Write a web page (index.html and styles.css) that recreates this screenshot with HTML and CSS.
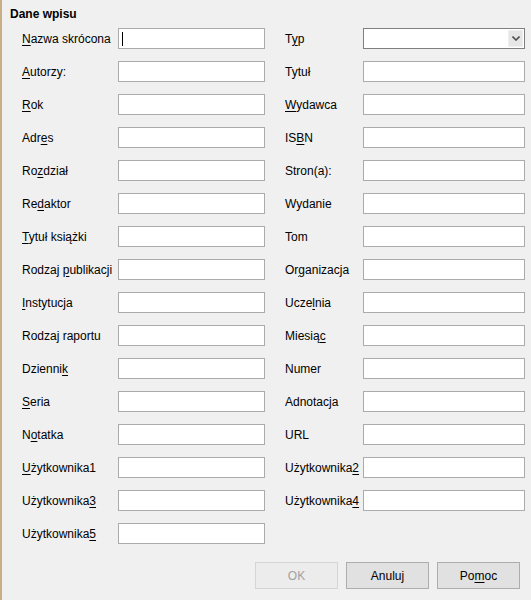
FILE: index.html
```html
<!DOCTYPE html>
<html lang="pl">
<head>
<meta charset="utf-8">
<title>Dane wpisu</title>
<link rel="stylesheet" href="styles.css">
</head>
<body>
<div class="dialog">
  <div class="title">Dane wpisu</div>
  <div class="form">
    <label class="lbl"><span><u>N</u>azwa skrócona</span></label>
    <div class="field"><span class="caret"></span></div>
    <label class="lbl r"><span>T<u>y</u>p</span></label>
    <div class="combo"><span class="drop"><svg width="8" height="5" viewBox="0 0 8 5"><path d="M0.5 0.5 L4 4 L7.5 0.5" fill="none" stroke="#505050" stroke-width="1.6"/></svg></span></div>

    <label class="lbl"><span><u>A</u>utorzy:</span></label>
    <div class="field"></div>
    <label class="lbl r"><span>Tytuł</span></label>
    <div class="field wide"></div>

    <label class="lbl"><span><u>R</u>ok</span></label>
    <div class="field"></div>
    <label class="lbl r"><span><u>W</u>ydawca</span></label>
    <div class="field wide"></div>

    <label class="lbl"><span>Adr<u>e</u>s</span></label>
    <div class="field"></div>
    <label class="lbl r"><span>IS<u>B</u>N</span></label>
    <div class="field wide"></div>

    <label class="lbl"><span>Ro<u>z</u>dział</span></label>
    <div class="field"></div>
    <label class="lbl r"><span>Stron(a):</span></label>
    <div class="field wide"></div>

    <label class="lbl"><span>Re<u>d</u>aktor</span></label>
    <div class="field"></div>
    <label class="lbl r"><span>Wydanie</span></label>
    <div class="field wide"></div>

    <label class="lbl"><span><u>T</u>ytuł książki</span></label>
    <div class="field"></div>
    <label class="lbl r"><span>Tom</span></label>
    <div class="field wide"></div>

    <label class="lbl"><span>Rodzaj <u>p</u>ublikacji</span></label>
    <div class="field"></div>
    <label class="lbl r"><span>Or<u>g</u>anizacja</span></label>
    <div class="field wide"></div>

    <label class="lbl"><span><u>I</u>nstytucja</span></label>
    <div class="field"></div>
    <label class="lbl r"><span>Ucze<u>l</u>nia</span></label>
    <div class="field wide"></div>

    <label class="lbl"><span>Rodzaj raportu</span></label>
    <div class="field"></div>
    <label class="lbl r"><span>Miesią<u>c</u></span></label>
    <div class="field wide"></div>

    <label class="lbl"><span>Dzienni<u>k</u></span></label>
    <div class="field"></div>
    <label class="lbl r"><span>Numer</span></label>
    <div class="field wide"></div>

    <label class="lbl"><span><u>S</u>eria</span></label>
    <div class="field"></div>
    <label class="lbl r"><span>Adnotacja</span></label>
    <div class="field wide"></div>

    <label class="lbl"><span>N<u>o</u>tatka</span></label>
    <div class="field"></div>
    <label class="lbl r"><span>URL</span></label>
    <div class="field wide"></div>

    <label class="lbl"><span><u>U</u>żytkownika1</span></label>
    <div class="field"></div>
    <label class="lbl r"><span>Użytkownika<u>2</u></span></label>
    <div class="field wide"></div>

    <label class="lbl"><span>Użytkownika<u>3</u></span></label>
    <div class="field"></div>
    <label class="lbl r"><span>Użytkownika<u>4</u></span></label>
    <div class="field wide"></div>

    <label class="lbl"><span>Użytkownika<u>5</u></span></label>
    <div class="field"></div>
  </div>
  <div class="buttons">
    <button class="btn disabled">OK</button>
    <button class="btn">Anuluj</button>
    <button class="btn">Po<u>m</u>oc</button>
  </div>
</div>
</body>
</html>
```

FILE: styles.css
```css
html, body {
  margin: 0;
  padding: 0;
  background: #f0f0f0;
}
body {
  font-family: "Liberation Sans", Arial, sans-serif;
  font-size: 12px;
  color: #000;
}
.dialog {
  width: 529px;
  height: 600px;
  border-left: 2px solid #c9ad84;
  box-sizing: content-box;
}
.title {
  font-weight: bold;
  line-height: 16px;
  padding: 6px 0 0 8px;
  margin-bottom: 6px;
}
.form {
  display: grid;
  grid-template-columns: 96px 147px 98px 162px;
  grid-auto-rows: 21px;
  row-gap: 12px;
  padding-left: 20px;
}
.lbl {
  display: flex;
  align-items: center;
  white-space: nowrap;
  line-height: 14px;
}
.lbl.r {
  padding-left: 20px;
}
u {
  text-decoration: underline;
  text-underline-offset: 2px;
}
.field {
  background: #fff;
  border: 1px solid #ababab;
  box-sizing: border-box;
  position: relative;
}
.caret {
  position: absolute;
  left: 3px;
  top: 3px;
  width: 1px;
  height: 14px;
  background: #000;
}
.combo {
  background: #fff;
  border: 1px solid #7f7f7f;
  box-sizing: border-box;
  display: flex;
  justify-content: flex-end;
  padding: 1px;
}
.drop {
  width: 15px;
  background: #e6e6e6;
  border: 1px solid #efefef;
  box-sizing: border-box;
  display: flex;
  align-items: center;
  justify-content: center;
}
.buttons {
  display: flex;
  justify-content: flex-end;
  gap: 8px;
  padding-right: 11px;
  margin-top: 18px;
}
.btn {
  width: 83px;
  height: 27px;
  font-family: inherit;
  font-size: 12px;
  color: #000;
  background: #e1e1e1;
  border: 1px solid #adadad;
  padding: 0;
  margin: 0;
}
.btn.disabled {
  color: #a0a0a0;
  background: #ececec;
  border-color: #d5d5d5;
}
```
